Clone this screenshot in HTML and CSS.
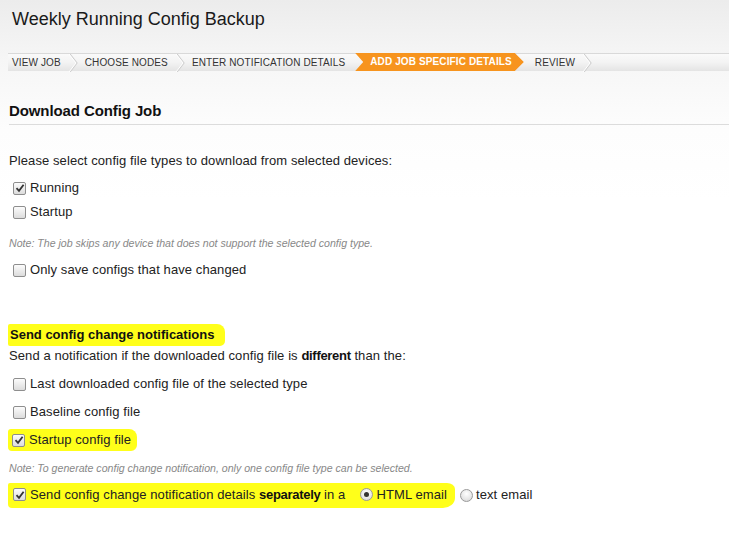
FILE: index.html
```html
<!DOCTYPE html>
<html>
<head>
<meta charset="utf-8">
<link rel="stylesheet" href="styles.css">
</head>
<body>
<div class="page">
  <h1 class="title">Weekly Running Config Backup</h1>
  <nav class="crumbs">
    <span class="crumb">VIEW JOB</span>
    <svg class="sep" width="9" height="18" viewBox="0 0 9 18"><polyline points="1,0 8,9 1,18" fill="none" stroke="#cfcfcf" stroke-width="1.2"/><polyline points="0,0 7,9 0,18" fill="none" stroke="#ffffff" stroke-width="1"/></svg>
    <span class="crumb">CHOOSE NODES</span>
    <svg class="sep" width="9" height="18" viewBox="0 0 9 18"><polyline points="1,0 8,9 1,18" fill="none" stroke="#cfcfcf" stroke-width="1.2"/><polyline points="0,0 7,9 0,18" fill="none" stroke="#ffffff" stroke-width="1"/></svg>
    <span class="crumb">ENTER NOTIFICATION DETAILS</span>
    <span class="crumb active">ADD JOB SPECIFIC DETAILS</span>
    <span class="crumb">REVIEW</span>
    <svg class="sep" width="9" height="18" viewBox="0 0 9 18"><polyline points="1,0 8,9 1,18" fill="none" stroke="#cfcfcf" stroke-width="1.2"/><polyline points="0,0 7,9 0,18" fill="none" stroke="#ffffff" stroke-width="1"/></svg>
  </nav>

  <div class="content">
    <h2 class="section">Download Config Job</h2>

    <p class="row intro">Please select config file types to download from selected devices:</p>
    <div class="row opt first"><span class="cb checked"><svg width="10" height="10" viewBox="0 0 10 10"><path d="M1.5 5.2 L4 7.8 L8.6 1.8" fill="none" stroke="#333" stroke-width="1.8"/></svg></span><span>Running</span></div>
    <div class="row opt"><span class="cb"></span><span>Startup</span></div>
    <p class="note n1">Note: The job skips any device that does not support the selected config type.</p>
    <div class="row opt after-note"><span class="cb"></span><span>Only save configs that have changed</span></div>

    <div class="row sub-head"><span class="hl hl-head">Send config change notifications</span></div>
    <p class="desc">Send a notification if the downloaded config file is <b>different</b> than the:</p>
    <div class="row opt spaced"><span class="cb"></span><span>Last downloaded config file of the selected type</span></div>
    <div class="row opt spaced"><span class="cb"></span><span>Baseline config file</span></div>
    <div class="row opt spaced"><span class="hl hl-startup"><span class="cb checked"><svg width="10" height="10" viewBox="0 0 10 10"><path d="M1.5 5.2 L4 7.8 L8.6 1.8" fill="none" stroke="#333" stroke-width="1.8"/></svg></span><span>Startup config file</span></span></div>
    <p class="note n2">Note: To generate config change notification, only one config file type can be selected.</p>
    <div class="row opt after-note"><span class="hl hl-send"><span class="cb checked"><svg width="10" height="10" viewBox="0 0 10 10"><path d="M1.5 5.2 L4 7.8 L8.6 1.8" fill="none" stroke="#333" stroke-width="1.8"/></svg></span><span>Send config change notification details <b>separately</b> in a</span><span class="rd on"></span><span>HTML email</span></span><span class="rd plain"></span><span>text email</span></div>
  </div>
</div>
</body>
</html>
```

FILE: styles.css
```css
html, body {
  margin: 0;
  padding: 0;
}
body {
  background: linear-gradient(to bottom, #ececec 0px, #f6f6f6 60px, #fdfdfd 130px, #ffffff 200px);
  font-family: Arial, "Liberation Sans", sans-serif;
  color: #222;
  width: 729px;
  height: 533px;
  overflow: hidden;
}
.page {
  display: flex;
  flex-direction: column;
}
.title {
  margin: 0;
  padding: 8px 0 0 12px;
  font-size: 18px;
  line-height: 22px;
  font-weight: normal;
  color: #1a1a1a;
}
.crumbs {
  margin: 23px 0 0 8px;
  height: 18px;
  display: flex;
  align-items: center;
  background: linear-gradient(to bottom, #fafafa 0%, #f3f3f3 50%, #e4e4e4 100%);
  border-top: 1px solid #d9d9d9;
  box-sizing: border-box;
}
.crumb {
  font-size: 10px;
  line-height: 17px;
  letter-spacing: 0.12px;
  color: #333;
  padding: 0 8px 0 4px;
  white-space: nowrap;
}
.sep {
  display: block;
  flex: none;
  margin-right: 3px;
}
.crumb.active {
  background: #f7941e;
  color: #fff;
  font-weight: bold;
  height: 18px;
  margin-top: -1px;
  padding: 0 12px 0 15px;
  line-height: 18px;
  clip-path: polygon(0 0, calc(100% - 9px) 0, 100% 50%, calc(100% - 9px) 100%, 0 100%, 8px 50%);
  margin-left: 2px;
  margin-right: 7px;
}
.content {
  padding-left: 9px;
  display: flex;
  flex-direction: column;
  letter-spacing: 0.09px;
}
.content b {
  letter-spacing: -0.3px;
  color: #111;
}
.section {
  margin: 29px 0 0 0;
  font-size: 15px;
  line-height: 21px;
  font-weight: bold;
  color: #111;
  padding-bottom: 3px;
  border-bottom: 1px solid #dcdcdc;
  letter-spacing: -0.1px;
}
.row {
  margin: 0;
  font-size: 13px;
  line-height: 18px;
  height: 18px;
  display: flex;
  align-items: center;
}
.intro { margin-top: 27px; }
.opt { margin-top: 6px; padding-left: 4px; }
.opt.first { margin-top: 9px; }
.opt.after-note { margin-top: 11px; }
.opt.spaced { margin-top: 10px; }
.sub-head { margin-top: 47px; font-weight: bold; color: #111; margin-left: 1px; letter-spacing: 0; }
.desc {
  margin: 3px 0 0 0;
  font-size: 13px;
  line-height: 18px;
}
.note {
  margin: 0;
  font-size: 10.6px;
  line-height: 14px;
  font-style: italic;
  color: #888;
  letter-spacing: 0;
}
.n1 { margin-top: 15px; }
.n2 { margin-top: 12px; }

.cb {
  width: 11px;
  height: 11px;
  border: 1px solid #8e8e8e;
  border-radius: 2px;
  background: linear-gradient(to bottom, #fcfcfc, #dcdcdc);
  margin-right: 4px;
  flex: none;
  display: flex;
  align-items: center;
  justify-content: center;
  box-sizing: content-box;
}
.cb svg { display: block; }
.rd {
  width: 11px;
  height: 11px;
  border: 1px solid #9a9a9a;
  border-radius: 50%;
  background: radial-gradient(circle at 50% 35%, #ffffff 0%, #e6e6e6 60%, #cfcfcf 100%);
  margin: 0 3px 0 0;
  flex: none;
  display: flex;
  align-items: center;
  justify-content: center;
}
.rd.on::before {
  content: "";
  width: 5px;
  height: 5px;
  border-radius: 50%;
  background: #333;
}
.hl {
  background: #ffff1a;
  display: flex;
  align-items: center;
}
.hl-head {
  padding: 2px 11px 2px 2px;
  margin-left: -2px;
  border-radius: 2px 8px 5px 2px;
}
.hl-startup {
  padding: 2px 6px 2px 4px;
  margin-left: -5px;
  border-radius: 3px 8px 6px 4px;
}
.hl-send {
  padding: 3px 8px 4px 5px;
  margin-left: -5px;
  margin-right: 5px;
  border-radius: 2px 8px 12px 4px / 2px 6px 10px 4px;
}
.hl-send .rd { margin-left: 15px; }
```
